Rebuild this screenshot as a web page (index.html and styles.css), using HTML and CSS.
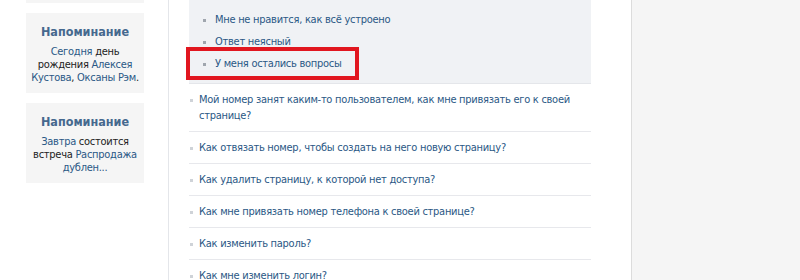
FILE: index.html
```html
<!DOCTYPE html>
<html lang="ru">
<head>
<meta charset="utf-8">
<link rel="stylesheet" href="styles.css">
</head>
<body>
<div class="page">
  <aside class="left">
    <div class="box cut"></div>
    <div class="box">
      <div class="box-title">Напоминание</div>
      <div class="box-text"><span class="lnk">Сегодня</span> день рождения <span class="lnk">Алексея Кустова</span>, <span class="lnk">Оксаны Рэм</span>.</div>
    </div>
    <div class="box">
      <div class="box-title">Напоминание</div>
      <div class="box-text"><span class="lnk">Завтра</span> состоится встреча <span class="lnk">Распродажа дублен...</span></div>
    </div>
  </aside>
  <main class="main">
    <div class="reasons">
      <ul class="reason-list">
        <li>Мне не нравится, как всё устроено</li>
        <li>Ответ неясный</li>
        <li>У меня остались вопросы</li>
      </ul>
      <div class="highlight"></div>
    </div>
    <ul class="faq">
      <li>Мой номер занят каким-то пользователем, как мне привязать его к своей странице?</li>
      <li>Как отвязать номер, чтобы создать на него новую страницу?</li>
      <li>Как удалить страницу, к которой нет доступа?</li>
      <li>Как мне привязать номер телефона к своей странице?</li>
      <li>Как изменить пароль?</li>
      <li>Как мне изменить логин?</li>
    </ul>
  </main>
  <aside class="right"></aside>
</div>
</body>
</html>
```
FILE: styles.css
```css
html, body {
  margin: 0;
  padding: 0;
  background: #fff;
  overflow: hidden;
}
body {
  font-family: "DejaVu Sans Condensed", "DejaVu Sans", Verdana, sans-serif;
  font-size: 11px;
  letter-spacing: -0.27px;
  color: #000;
}
.page {
  display: flex;
  height: 280px;
}
.left {
  width: 168px;
  flex: none;
}
.box {
  margin-left: 26px;
  width: 118px;
  background: #f5f5f5;
  margin-bottom: 10px;
  padding: 11px 0 9px;
  text-align: center;
}
.box.cut {
  height: 3px;
  padding: 0;
}
.box-title {
  font-weight: bold;
  font-size: 12.5px;
  letter-spacing: 0;
  color: #45688e;
  line-height: 16px;
  margin-bottom: 5px;
}
.box-text {
  line-height: 13px;
  color: #222;
  padding: 0;
}
.lnk { color: #2a5885; }
.main {
  width: 422px;
  flex: none;
  border-left: 1px solid #e4e6ea;
  padding-left: 20px;
  color: #2a5885;
}
.reasons {
  position: relative;
  background: #f0f2f5;
  border-bottom: 1px solid #e4e6ea;
  height: 84px;
  width: 402px;
  box-sizing: border-box;
}
.reason-list {
  list-style: none;
  margin: 0;
  padding: 12px 0 0 26px;
}
.reason-list li {
  line-height: 16px;
  margin-bottom: 6px;
  position: relative;
}
.reason-list li::before,
.faq li::before {
  content: "";
  position: absolute;
  width: 3px;
  height: 3px;
  background: #a0a6ae;
  left: -12px;
  top: 7px;
}
.highlight {
  position: absolute;
  left: -3px;
  top: 47px;
  width: 165px;
  height: 25px;
  border: 4px solid #e1161f;
}
.faq {
  list-style: none;
  margin: 0;
  padding: 0;
  width: 402px;
}
.faq li {
  position: relative;
  padding: 8px 14px 7px 10px;
  line-height: 16px;
  border-bottom: 1px solid #e7e8ec;
}
.faq li::before {
  left: 1px;
  top: 15px;
  background: #cfd3d8;
}
.right {
  margin-left: 20px;
  width: 185px;
  flex: none;
  background: #f5f5f5;
  border-left: 1px solid #dcdcdc;
  border-right: 1px solid #dcdcdc;
}
```
